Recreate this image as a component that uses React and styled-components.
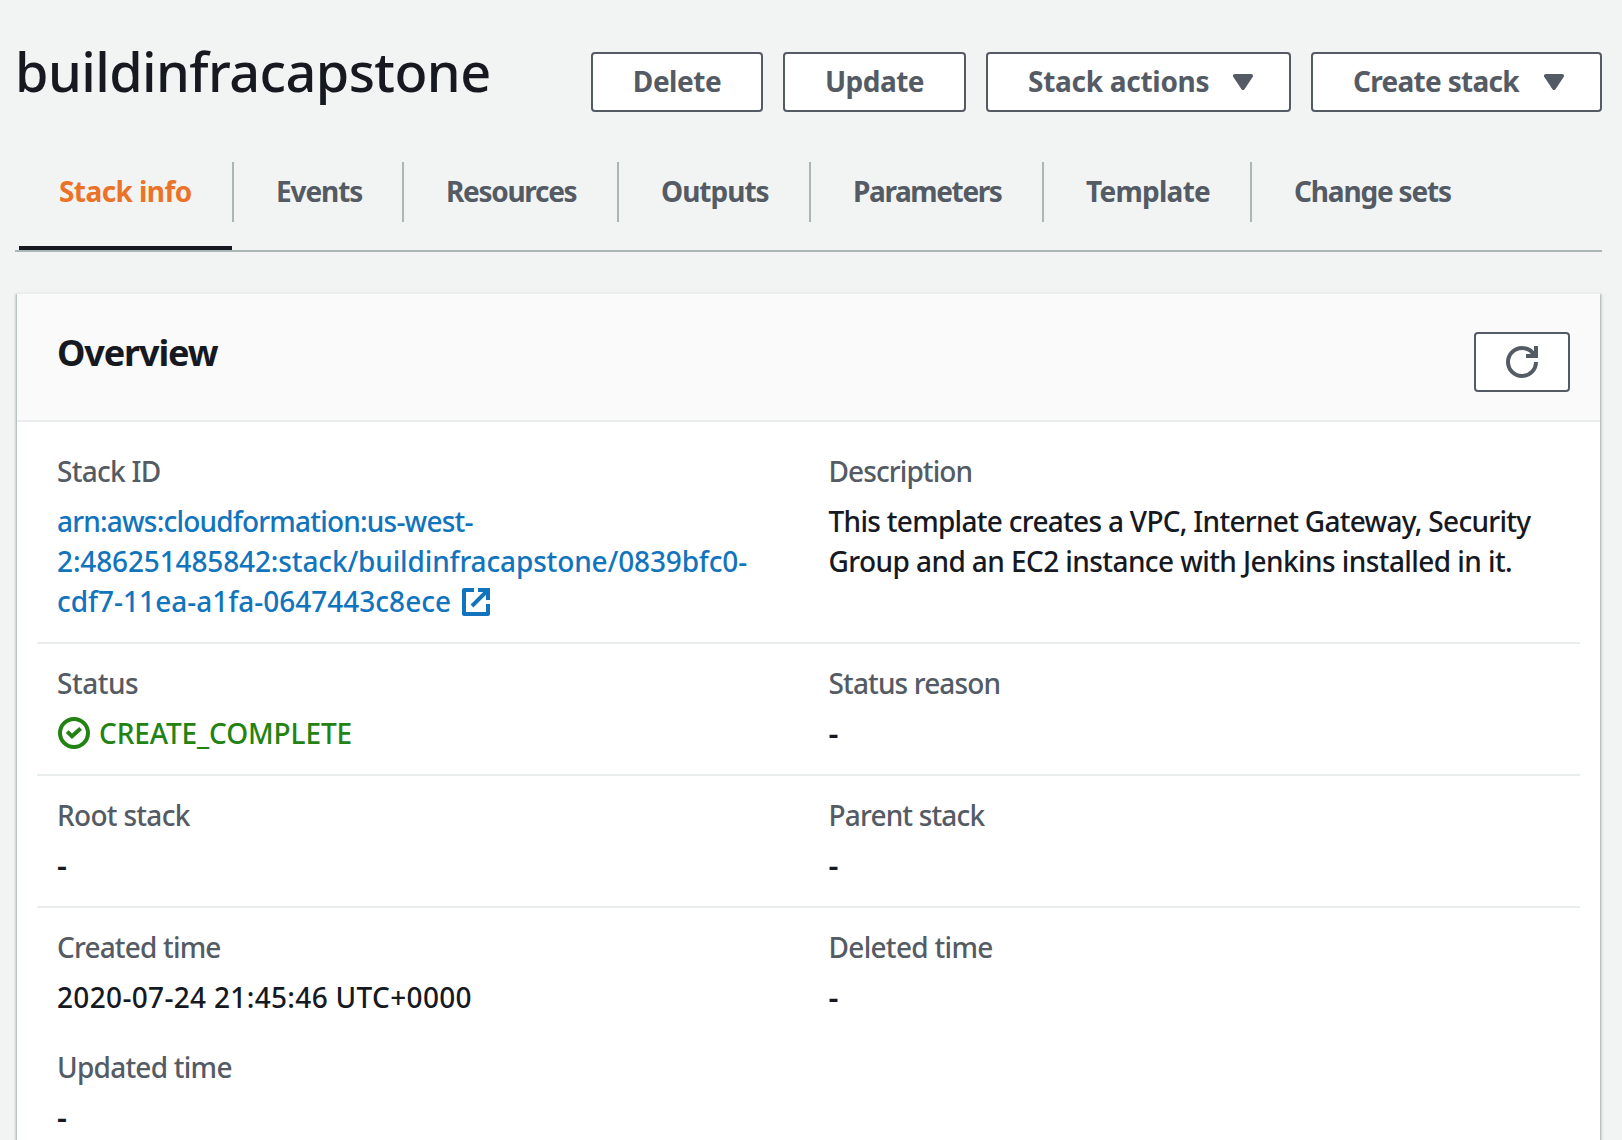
import React from "react";
import styled, { createGlobalStyle } from "styled-components";

const color = {
  page: "#f2f4f3",
  ink: "#16191f",
  muted: "#545b64",
  line: "#eaeded",
  rule: "#a9b7b7",
  orange: "#eb7226",
  link: "#1174bc",
  ok: "#228212",
};

const GlobalStyle = createGlobalStyle`
  *, *::before, *::after { box-sizing: border-box; }
  body {
    margin: 0;
    background: ${color.page};
    color: ${color.ink};
    font-family: "Noto Sans", sans-serif;
    font-size: 28px;
    line-height: 40px;
  }
`;

const Page = styled.main`
  height: 1140px;
  overflow: hidden;
  padding: 40px 20px 0 15px;
`;

const Header = styled.header`
  display: flex;
  justify-content: space-between;
  align-items: flex-start;
`;

const Title = styled.h1`
  margin: 0;
  padding-top: 1px;
  font-size: 54px;
  line-height: 61px;
  font-weight: 460;
  letter-spacing: -0.58px;
  white-space: nowrap;
`;

const Actions = styled.div`
  display: flex;
  gap: 20px;
  padding-top: 12px;
`;

const Button = styled.button`
  display: flex;
  align-items: center;
  justify-content: ${(p) => (p.$menu ? "space-between" : "center")};
  width: ${(p) => p.$width}px;
  height: 60px;
  padding: ${(p) => (p.$menu ? "0 36px 0 40px" : "0")};
  border: 2px solid ${color.muted};
  border-radius: 4px;
  background: #fff;
  color: ${color.muted};
  font: 700 28px/40px "Noto Sans", sans-serif;
  white-space: nowrap;
`;

const ButtonText = styled.span`
  padding-bottom: 2px;
  letter-spacing: ${(p) => p.$ls}px;
`;

const Tabs = styled.nav`
  display: flex;
  height: 90px;
  margin-top: 50px;
  padding-left: 4px;
  border-bottom: 2px solid ${color.rule};
`;

const Tab = styled.div`
  display: flex;
  flex-direction: column;
  width: ${(p) => p.$width}px;
`;

const TabLabel = styled.a`
  height: 60px;
  padding-left: ${(p) => (p.$active ? 40 : 42)}px;
  border-right: 2px solid ${(p) => (p.$last ? "transparent" : color.rule)};
  color: ${(p) => (p.$active ? color.orange : color.muted)};
  font-weight: 700;
  line-height: 59px;
  letter-spacing: ${(p) => p.$ls}px;
  white-space: nowrap;
`;

const TabMarker = styled.div`
  height: 4px;
  margin: 24px 2px 0 0;
  background: ${color.ink};
`;

const Card = styled.section`
  height: 900px;
  margin: 40px 2px 0;
  border-top: 2px solid ${color.line};
  background: #fff;
  box-shadow: 0 2px 2px 0 rgba(0, 28, 36, 0.3), 2px 2px 2px 0 rgba(0, 28, 36, 0.15),
    -2px 2px 2px 0 rgba(0, 28, 36, 0.15);
`;

const CardHeader = styled.div`
  display: flex;
  justify-content: space-between;
  height: 128px;
  padding: 38px 30px 0 40px;
  border-bottom: 2px solid ${color.line};
  background: #fafafa;
`;

const CardTitle = styled.h2`
  margin: 0;
  font-size: 36px;
  line-height: 42px;
  font-weight: 700;
  letter-spacing: -1.15px;
`;

const Details = styled.div`
  padding: 10px 20px 0;
`;

const DetailRow = styled.div`
  display: grid;
  grid-template-columns: 1fr 1fr;
  padding: 19px 0 21px;
  border-bottom: 2px solid ${color.line};
`;

const Column = styled.div`
  display: flex;
  flex-direction: column;
  gap: 30px;
  padding-left: 20px;
`;

const Field = styled.div`
  display: flex;
  flex-direction: column;
  gap: 10px;
  font-weight: 500;
`;

const Label = styled.div`
  color: ${color.muted};
  letter-spacing: ${(p) => p.$ls}px;
`;

const Line = styled.span`
  display: block;
  height: 40px;
  letter-spacing: ${(p) => p.$ls}px;
  white-space: nowrap;
`;

const Dash = styled(Line)`
  font-size: 31px;
  font-weight: 600;
  line-height: 41px;
`;

const Link = styled.a`
  color: ${color.link};
`;

const LinkEnd = styled.span`
  display: flex;
  align-items: center;
  gap: 9px;

  svg {
    margin-top: 2px;
  }
`;

const Status = styled.div`
  display: flex;
  align-items: center;
  gap: 9px;
  padding-left: 1px;
  color: ${color.ok};
`;

const Icon = styled.svg`
  display: block;
  flex: none;
  fill: none;
  stroke: currentColor;
  stroke-width: 2;
`;

const Caret = () => (
  <Icon width="20" height="16" viewBox="0 0 10 8">
    <path d="M1 1h8L5 7z" fill="currentColor" strokeLinejoin="round" />
  </Icon>
);

const Refresh = () => (
  <Icon width="32" height="32" viewBox="0 0 16 16">
    <path d="M10 5h5V0" />
    <path d="M15 8c0 3.87-3.13 7-7 7s-7-3.13-7-7 3.13-7 7-7c2.79 0 5.2 1.63 6.33 4" />
  </Icon>
);

const External = () => (
  <Icon width="32" height="32" viewBox="0 0 16 16">
    <path d="M14 9v5H2V2h5" strokeLinejoin="round" />
    <path d="M9 2h5v5M6 10l7.7-7.7" />
  </Icon>
);

const Check = () => (
  <Icon width="32" height="32" viewBox="0 0 16 16">
    <circle cx="8" cy="8" r="7" />
    <path d="M4.6 7.3L7 9.6l4.3-3.9" />
  </Icon>
);

const tabs = [
  ["Stack info", 215, -0.57],
  ["Events", 170, -1.1],
  ["Resources", 215, -1.3],
  ["Outputs", 192, -1],
  ["Parameters", 233, -1.38],
  ["Template", 208, -0.73],
  ["Change sets", 240, -1.18],
];

const Item = ({ label, ls, children }) => (
  <Field>
    <Label $ls={ls}>{label}</Label>
    {children || <Dash>-</Dash>}
  </Field>
);

export default function App() {
  return (
    <Page>
      <GlobalStyle />
      <Header>
        <Title>buildinfracapstone</Title>
        <Actions>
          <Button $width={172}>
            <ButtonText $ls={-0.48}>Delete</ButtonText>
          </Button>
          <Button $width={183}>
            <ButtonText $ls={-0.5}>Update</ButtonText>
          </Button>
          <Button $width={305} $menu>
            <ButtonText $ls={-0.28}>Stack actions</ButtonText>
            <Caret />
          </Button>
          <Button $width={291} $menu>
            <ButtonText $ls={-0.7}>Create stack</ButtonText>
            <Caret />
          </Button>
        </Actions>
      </Header>

      <Tabs>
        {tabs.map(([name, width, ls], i) => (
          <Tab key={name} $width={width}>
            <TabLabel $active={i === 0} $last={i === tabs.length - 1} $ls={ls}>
              {name}
            </TabLabel>
            {i === 0 && <TabMarker />}
          </Tab>
        ))}
      </Tabs>

      <Card>
        <CardHeader>
          <CardTitle>Overview</CardTitle>
          <Button $width={96} aria-label="Refresh">
            <Refresh />
          </Button>
        </CardHeader>
        <Details>
          <DetailRow>
            <Column>
              <Item label="Stack ID" ls={-0.7}>
                <Link>
                  <Line $ls={-0.8}>arn:aws:cloudformation:us-west-</Line>
                  <Line $ls={-0.14}>2:486251485842:stack/buildinfracapstone/0839bfc0-</Line>
                  <LinkEnd>
                    <Line $ls={0}>cdf7-11ea-a1fa-0647443c8ece</Line>
                    <External />
                  </LinkEnd>
                </Link>
              </Item>
            </Column>
            <Column>
              <Item label="Description" ls={-0.9}>
                <div>
                  <Line $ls={-0.7}>This template creates a VPC, Internet Gateway, Security</Line>
                  <Line $ls={-0.58}>Group and an EC2 instance with Jenkins installed in it.</Line>
                </div>
              </Item>
            </Column>
          </DetailRow>
          <DetailRow>
            <Column>
              <Item label="Status" ls={-0.48}>
                <Status>
                  <Check />
                  <Line $ls={-0.12}>CREATE_COMPLETE</Line>
                </Status>
              </Item>
            </Column>
            <Column>
              <Item label="Status reason" ls={-0.87} />
            </Column>
          </DetailRow>
          <DetailRow>
            <Column>
              <Item label="Root stack" ls={-0.7} />
            </Column>
            <Column>
              <Item label="Parent stack" ls={-0.83} />
            </Column>
          </DetailRow>
          <DetailRow>
            <Column>
              <Item label="Created time" ls={-0.82}>
                <Line $ls={0.33}>2020-07-24 21:45:46 UTC+0000</Line>
              </Item>
              <Item label="Updated time" ls={-0.75} />
            </Column>
            <Column>
              <Item label="Deleted time" ls={-0.7} />
            </Column>
          </DetailRow>
        </Details>
      </Card>
    </Page>
  );
}
